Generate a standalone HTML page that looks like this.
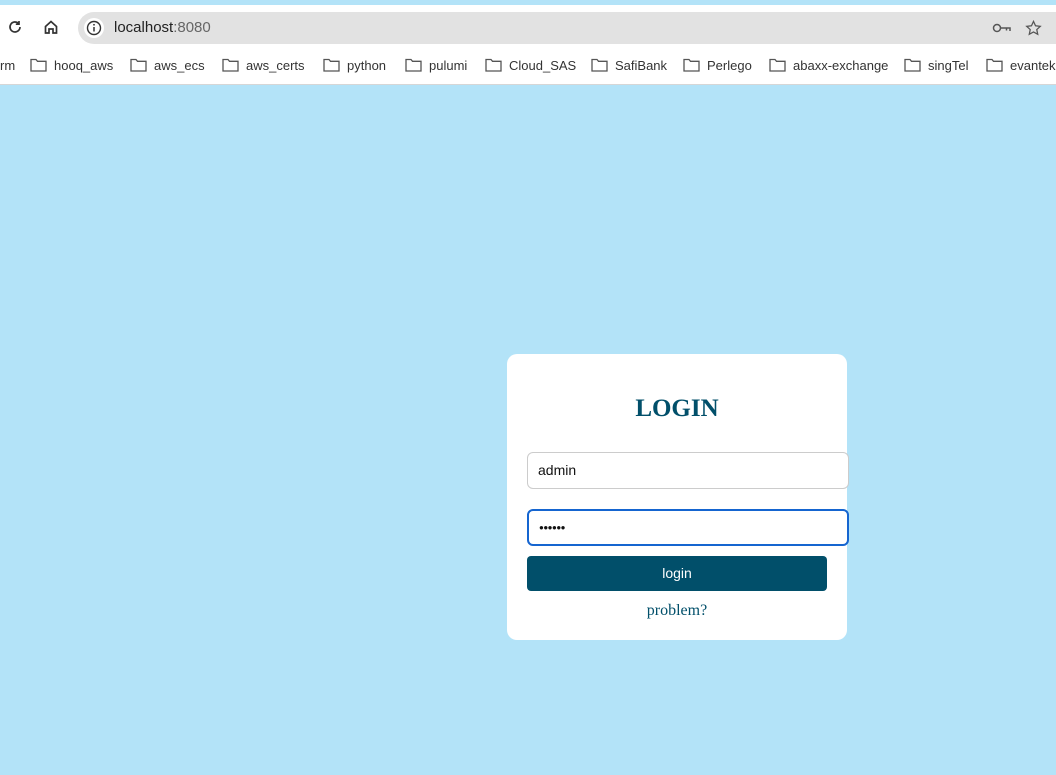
<!DOCTYPE html>
<html><head><meta charset="utf-8"><style>
*{margin:0;padding:0;box-sizing:border-box}
body{width:1056px;height:775px;background:#b3e3f8;font-family:"Liberation Sans",sans-serif;position:relative;overflow:hidden}
.top{position:absolute;left:0;top:0;width:1056px;height:5px;background:#b3e3f8}
.bar{position:absolute;left:0;top:5px;width:1056px;height:80px;background:#fff;border-bottom:1px solid #d6d6d6}
.url{position:absolute;left:78px;top:7px;width:978px;height:32px;background:#e2e2e2;border-radius:16px 0 0 16px}
.urltxt{position:absolute;left:114px;top:14px;font-size:15px;color:#222}
.urltxt span{color:#666}
.bm{position:absolute;top:58px;font-size:13px;color:#333;white-space:nowrap}
.bm svg{position:absolute;left:0;top:0}
.ab{position:absolute}
.card{position:absolute;left:507px;top:354px;width:340px;height:286px;background:#fff;border-radius:10px}
h1{position:absolute;left:507px;width:340px;top:395px;text-align:center;font-family:"Liberation Serif",serif;font-size:25px;color:#014f6a;font-weight:bold}
.in{position:absolute;left:527px;width:322px;height:37px;background:#fff;border-radius:6px;font-size:14px;color:#111;padding-left:10px;line-height:35px}
.btn{position:absolute;left:527px;top:556px;width:300px;height:35px;background:#014f6a;border-radius:4px;color:#fff;text-align:center;line-height:35px;font-size:14px}
.pr{position:absolute;left:507px;width:340px;top:602px;text-align:center;font-family:"Liberation Serif",serif;font-size:16px;color:#014f6a}
</style></head><body>
<div class="top"></div>
<div class="bar">
<svg class="ab" style="left:7px;top:14px" width="16" height="16" viewBox="0 0 16 16" fill="none" stroke="#333" stroke-width="1.7"><path d="M13 8a5 5 0 1 1-1.5-3.6"/><path d="M12 2v3.2H8.8" /></svg>
<svg class="ab" style="left:43px;top:14px" width="16" height="16" viewBox="0 0 16 16" fill="none" stroke="#333" stroke-width="1.7"><path d="M2.5 7.5L8 2.5l5.5 5V14H10V10H6v4H2.5z"/></svg>
<div class="url"></div>
<svg class="ab" style="left:84px;top:13px" width="20" height="20" viewBox="0 0 20 20"><circle cx="10" cy="10" r="10" fill="#fff"/><circle cx="10" cy="10" r="6.5" fill="none" stroke="#333" stroke-width="1.4"/><path d="M10 9v4.5" stroke="#333" stroke-width="1.5"/><circle cx="10" cy="6.8" r="0.9" fill="#333"/></svg>
<div class="urltxt">localhost<span>:8080</span></div>
<svg class="ab" style="left:992px;top:17px" width="20" height="12" viewBox="0 0 20 12" fill="none" stroke="#555" stroke-width="1.5"><circle cx="5" cy="6" r="3.5"/><path d="M8.5 6H18v3M14.5 6v2.5"/></svg>
<svg class="ab" style="left:1025px;top:15px" width="17" height="16" viewBox="0 0 24 23" fill="none" stroke="#555" stroke-width="1.8"><path d="M12 2l2.9 6.3 6.9.8-5.1 4.7 1.4 6.8L12 17.2l-6.1 3.4 1.4-6.8L2.2 9.1l6.9-.8z"/></svg>
</div>
<div class="bm" style="left:0">rm</div>
<div class="bm" style="left:30px"><svg width="17" height="14" viewBox="0 0 17 14" fill="none" stroke="#555" stroke-width="1.3"><path d="M1 1.5h5l1.5 1.8H16V13H1z"/></svg><span style="margin-left:24px">hooq_aws</span></div>
<div class="bm" style="left:130px"><svg width="17" height="14" viewBox="0 0 17 14" fill="none" stroke="#555" stroke-width="1.3"><path d="M1 1.5h5l1.5 1.8H16V13H1z"/></svg><span style="margin-left:24px">aws_ecs</span></div>
<div class="bm" style="left:222px"><svg width="17" height="14" viewBox="0 0 17 14" fill="none" stroke="#555" stroke-width="1.3"><path d="M1 1.5h5l1.5 1.8H16V13H1z"/></svg><span style="margin-left:24px">aws_certs</span></div>
<div class="bm" style="left:323px"><svg width="17" height="14" viewBox="0 0 17 14" fill="none" stroke="#555" stroke-width="1.3"><path d="M1 1.5h5l1.5 1.8H16V13H1z"/></svg><span style="margin-left:24px">python</span></div>
<div class="bm" style="left:405px"><svg width="17" height="14" viewBox="0 0 17 14" fill="none" stroke="#555" stroke-width="1.3"><path d="M1 1.5h5l1.5 1.8H16V13H1z"/></svg><span style="margin-left:24px">pulumi</span></div>
<div class="bm" style="left:485px"><svg width="17" height="14" viewBox="0 0 17 14" fill="none" stroke="#555" stroke-width="1.3"><path d="M1 1.5h5l1.5 1.8H16V13H1z"/></svg><span style="margin-left:24px">Cloud_SAS</span></div>
<div class="bm" style="left:591px"><svg width="17" height="14" viewBox="0 0 17 14" fill="none" stroke="#555" stroke-width="1.3"><path d="M1 1.5h5l1.5 1.8H16V13H1z"/></svg><span style="margin-left:24px">SafiBank</span></div>
<div class="bm" style="left:683px"><svg width="17" height="14" viewBox="0 0 17 14" fill="none" stroke="#555" stroke-width="1.3"><path d="M1 1.5h5l1.5 1.8H16V13H1z"/></svg><span style="margin-left:24px">Perlego</span></div>
<div class="bm" style="left:769px"><svg width="17" height="14" viewBox="0 0 17 14" fill="none" stroke="#555" stroke-width="1.3"><path d="M1 1.5h5l1.5 1.8H16V13H1z"/></svg><span style="margin-left:24px">abaxx-exchange</span></div>
<div class="bm" style="left:904px"><svg width="17" height="14" viewBox="0 0 17 14" fill="none" stroke="#555" stroke-width="1.3"><path d="M1 1.5h5l1.5 1.8H16V13H1z"/></svg><span style="margin-left:24px">singTel</span></div>
<div class="bm" style="left:986px"><svg width="17" height="14" viewBox="0 0 17 14" fill="none" stroke="#555" stroke-width="1.3"><path d="M1 1.5h5l1.5 1.8H16V13H1z"/></svg><span style="margin-left:24px">evantek</span></div>

<div class="card"></div>
<h1>LOGIN</h1>
<div class="in" style="top:452px;border:1px solid #ccc">admin</div>
<div class="in" style="top:509px;border:2px solid #1565d0;line-height:33px;padding-left:10px;font-size:8px;letter-spacing:-0.5px">●●●●●●</div>
<div class="btn">login</div>
<div class="pr">problem?</div>
</body></html>
